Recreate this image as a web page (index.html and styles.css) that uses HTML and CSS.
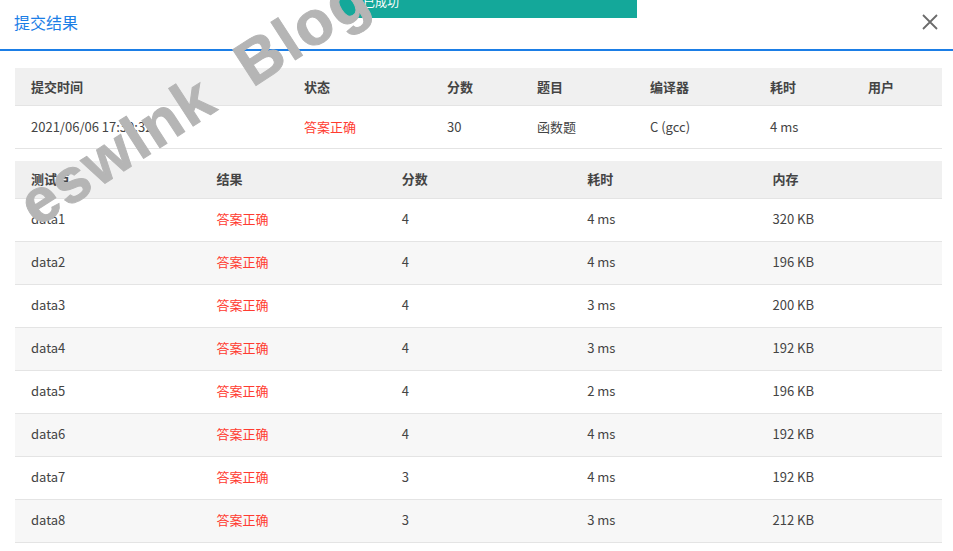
FILE: index.html
```html
<!DOCTYPE html>
<html lang="zh-CN">
<head>
  <meta charset="UTF-8">
  <meta name="viewport" content="width=device-width, initial-scale=1.0">
  <title>提交结果</title>
  <link rel="stylesheet" href="styles.css">
</head>
<body>

<div class="dialog">
  <div class="dialog-header">
    <h3 class="dialog-title">提交结果</h3>
    <span class="close-btn">
      <svg width="16" height="16" viewBox="0 0 16 16">
        <path d="M1 1 L15 15 M15 1 L1 15" stroke="#6b6b6b" stroke-width="1.8" fill="none"/>
      </svg>
    </span>
  </div>

  <div class="dialog-body">
    <table class="result-table summary">
      <colgroup>
        <col style="width: 273px">
        <col style="width: 143px">
        <col style="width: 90px">
        <col style="width: 113px">
        <col style="width: 120px">
        <col style="width: 98px">
        <col>
      </colgroup>
      <thead>
        <tr>
          <th>提交时间</th>
          <th>状态</th>
          <th>分数</th>
          <th>题目</th>
          <th>编译器</th>
          <th>耗时</th>
          <th>用户</th>
        </tr>
      </thead>
      <tbody>
        <tr>
          <td>2021/06/06 17:30:32</td>
          <td class="ok">答案正确</td>
          <td>30</td>
          <td>函数题</td>
          <td>C (gcc)</td>
          <td>4 ms</td>
          <td></td>
        </tr>
      </tbody>
    </table>

    <table class="result-table cases">
      <thead>
        <tr>
          <th>测试点</th>
          <th>结果</th>
          <th>分数</th>
          <th>耗时</th>
          <th>内存</th>
        </tr>
      </thead>
      <tbody>
        <tr><td>data1</td><td class="ok">答案正确</td><td>4</td><td>4 ms</td><td>320 KB</td></tr>
        <tr><td>data2</td><td class="ok">答案正确</td><td>4</td><td>4 ms</td><td>196 KB</td></tr>
        <tr><td>data3</td><td class="ok">答案正确</td><td>4</td><td>3 ms</td><td>200 KB</td></tr>
        <tr><td>data4</td><td class="ok">答案正确</td><td>4</td><td>3 ms</td><td>192 KB</td></tr>
        <tr><td>data5</td><td class="ok">答案正确</td><td>4</td><td>2 ms</td><td>196 KB</td></tr>
        <tr><td>data6</td><td class="ok">答案正确</td><td>4</td><td>4 ms</td><td>192 KB</td></tr>
        <tr><td>data7</td><td class="ok">答案正确</td><td>3</td><td>4 ms</td><td>192 KB</td></tr>
        <tr><td>data8</td><td class="ok">答案正确</td><td>3</td><td>3 ms</td><td>212 KB</td></tr>
      </tbody>
    </table>
  </div>
</div>

<div class="toast">已成功</div>

<div class="watermark">eswlnk  Blog</div>

</body>
</html>
```

FILE: styles.css
```css
body {
  margin: 0;
  font-family: "Noto Sans CJK SC", "Noto Sans", sans-serif;
  font-size: 13px;
  color: #444;
  background: #fff;
  overflow: hidden;
}

.dialog {
  width: 953px;
}

.dialog-header {
  display: flex;
  justify-content: space-between;
  align-items: center;
  height: 49px;
  padding: 0 15px 0 14px;
  border-bottom: 2px solid #1b7ee6;
}

.dialog-title {
  margin: 0;
  font-size: 16px;
  font-weight: normal;
  color: #1b7ee6;
  margin-top: -5px;
}

.close-btn {
  display: flex;
  margin-top: -5px;
}

.dialog-body {
  padding: 17px 11px 0 15px;
}

.result-table {
  width: 927px;
  border-collapse: collapse;
  table-layout: fixed;
}

.result-table th {
  height: 35px;
  padding: 0 16px 2px;
  text-align: left;
  font-weight: bold;
  color: #444;
  background: #f0f0f0;
  border-bottom: 1px solid #e4e4e4;
}

.result-table td {
  height: 39px;
  padding: 0 16px 3px;
  border-bottom: 1px solid #e4e4e4;
}

.summary {
  margin-bottom: 12px;
}

.summary th {
  height: 36px;
  padding-bottom: 1px;
}

.summary td {
  height: 40px;
  padding-bottom: 2px;
}

.cases tbody tr:nth-child(even) td {
  background: #f7f7f7;
}

.ok {
  color: #ff3b30;
}

.toast {
  position: absolute;
  left: 337px;
  top: -22px;
  width: 300px;
  height: 40px;
  box-sizing: border-box;
  padding: 15px 0 0 26px;
  background: #14a89a;
  color: #fff;
  font-size: 12px;
}

.watermark {
  position: absolute;
  left: 194px;
  top: 100px;
  transform: translate(-50%, -50%) rotate(-33deg);
  white-space: pre;
  font-family: "Liberation Sans", Arial, sans-serif;
  font-weight: bold;
  font-size: 62px;
  letter-spacing: 2px;
  color: #b5b5b5;
  -webkit-text-stroke: 1px #b5b5b5;
  pointer-events: none;
}
```
